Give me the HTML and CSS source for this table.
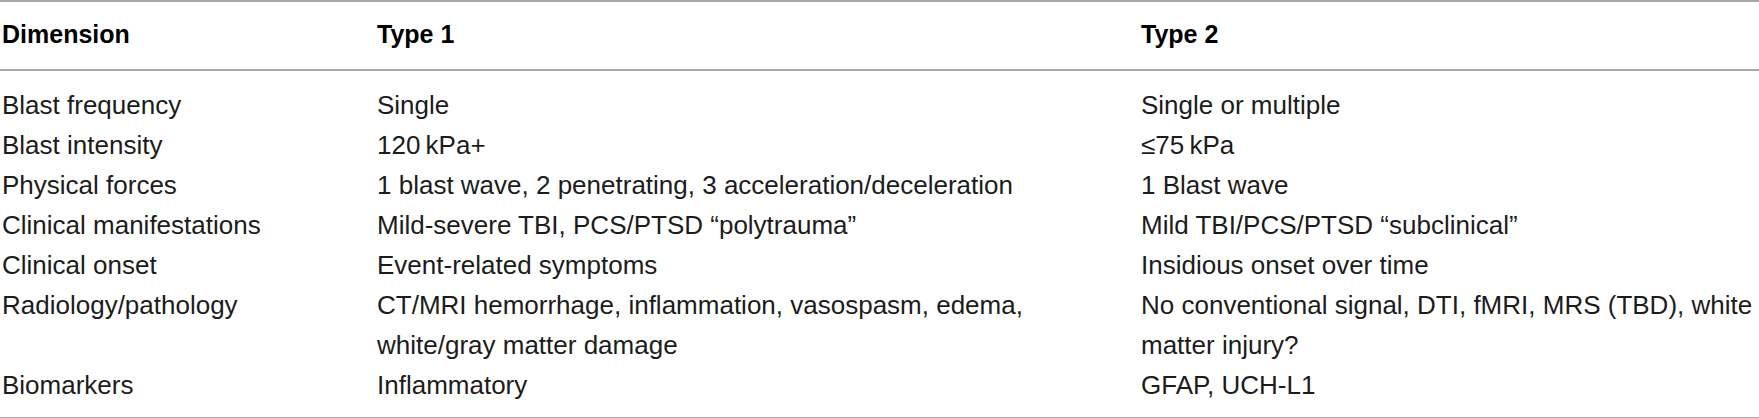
FILE: index.html
```html
<!DOCTYPE html>
<html lang="en">
<head>
<meta charset="utf-8">
<title>Blast TBI types</title>
<link rel="stylesheet" href="styles.css">
</head>
<body>
<table class="data-table">
  <colgroup>
    <col class="col-dim">
    <col class="col-t1">
    <col class="col-t2">
  </colgroup>
  <thead>
    <tr>
      <th>Dimension</th>
      <th>Type 1</th>
      <th>Type 2</th>
    </tr>
  </thead>
  <tbody>
    <tr class="first">
      <td>Blast frequency</td>
      <td>Single</td>
      <td>Single or multiple</td>
    </tr>
    <tr>
      <td>Blast intensity</td>
      <td>120&#8201;kPa+</td>
      <td>&le;75&#8201;kPa</td>
    </tr>
    <tr>
      <td>Physical forces</td>
      <td>1 blast wave, 2 penetrating, 3 acceleration/deceleration</td>
      <td>1 Blast wave</td>
    </tr>
    <tr>
      <td>Clinical manifestations</td>
      <td>Mild-severe TBI, PCS/PTSD &ldquo;polytrauma&rdquo;</td>
      <td>Mild TBI/PCS/PTSD &ldquo;subclinical&rdquo;</td>
    </tr>
    <tr>
      <td>Clinical onset</td>
      <td>Event-related symptoms</td>
      <td>Insidious onset over time</td>
    </tr>
    <tr>
      <td>Radiology/pathology</td>
      <td>CT/MRI hemorrhage, inflammation, vasospasm, edema, white/gray matter damage</td>
      <td>No conventional signal, DTI, fMRI, MRS (TBD), white matter injury?</td>
    </tr>
    <tr class="last">
      <td>Biomarkers</td>
      <td>Inflammatory</td>
      <td>GFAP, UCH-L1</td>
    </tr>
  </tbody>
</table>
</body>
</html>
```

FILE: styles.css
```css
html, body {
  margin: 0;
  padding: 0;
  background: #ffffff;
}

.data-table {
  width: 1759px;
  table-layout: fixed;
  border-collapse: collapse;
  font-family: "Liberation Sans", Arial, sans-serif;
  color: #1c1c1c;
  border-top: 2px solid #a8a8a8;
  border-bottom: 2px solid #a8a8a8;
}

.col-dim { width: 375px; }
.col-t1 { width: 764px; }
.col-t2 { width: 620px; }

.data-table th {
  text-align: left;
  font-weight: bold;
  font-size: 25px;
  line-height: 30px;
  padding: 17px 0 20px 2px;
  color: #000;
  border-bottom: 2px solid #a8a8a8;
}

.data-table td {
  vertical-align: top;
  font-size: 26px;
  line-height: 40px;
  padding: 0 0 0 2px;
}

.data-table tr.first td { padding-top: 14px; }
.data-table tr.last td { padding-bottom: 12px; }
```
